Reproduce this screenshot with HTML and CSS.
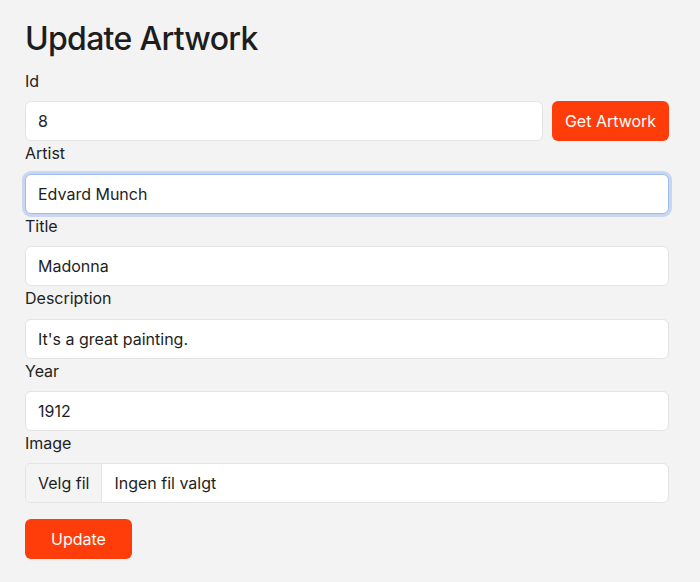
FILE: index.html
```html
<!DOCTYPE html>
<html lang="no">
<head>
<meta charset="utf-8">
<title>Update Artwork</title>
<link rel="stylesheet" href="styles.css">
</head>
<body>
<main class="page">
  <h1 class="title">Update Artwork</h1>
  <form class="form">
    <div class="group">
      <label class="label">Id</label>
      <div class="row">
        <div class="field field-grow">8</div>
        <button type="button" class="btn btn-get">Get Artwork</button>
      </div>
    </div>
    <div class="group">
      <label class="label">Artist</label>
      <div class="field field-focus">Edvard Munch</div>
    </div>
    <div class="group">
      <label class="label">Title</label>
      <div class="field">Madonna</div>
    </div>
    <div class="group">
      <label class="label">Description</label>
      <div class="field">It's a great painting.</div>
    </div>
    <div class="group">
      <label class="label">Year</label>
      <div class="field">1912</div>
    </div>
    <div class="group">
      <label class="label">Image</label>
      <div class="file">
        <span class="file-btn">Velg fil</span>
        <span class="file-name">Ingen fil valgt</span>
      </div>
    </div>
    <button type="button" class="btn btn-update">Update</button>
  </form>
</main>
</body>
</html>
```
FILE: styles.css
```css
html, body {
  margin: 0;
  padding: 0;
  background: #f3f3f3;
}
body {
  font-family: Inter, "Noto Sans", "Liberation Sans", sans-serif;
  font-size: 16px;
  color: #212121;
}
.page {
  width: 644px;
  padding: 20px 0 0 25px;
}
.title {
  margin: 0 0 10.6px 0;
  font-size: 32px;
  line-height: 1.2;
  font-weight: 500;
  color: #1d1d1d;
  letter-spacing: -0.7px;
}
.form {
  display: flex;
  flex-direction: column;
}
.label {
  display: block;
  line-height: 24px;
  margin-bottom: 8.4px;
  color: #222;
}
.row {
  display: flex;
  gap: 9px;
}
.field {
  box-sizing: border-box;
  height: 40px;
  padding: 7px 12px;
  line-height: 24px;
  background: #fff;
  border: 1px solid #e4e4e4;
  border-radius: 6px;
  color: #1e1e1e;
}
.field-grow {
  flex: 1;
}
.field-focus {
  border-color: #9dbdf0;
  box-shadow: 0 0 0 3px rgba(120, 160, 235, 0.35);
}
.btn {
  box-sizing: border-box;
  height: 40px;
  border: none;
  border-radius: 6px;
  background: #ff3d0a;
  color: #fff;
  font-family: inherit;
  font-size: 16px;
  line-height: 24px;
}
.btn-get {
  width: 117px;
  padding: 0 12px;
}
.btn-update {
  align-self: flex-start;
  width: 107px;
  margin-top: 16px;
  padding: 0 12px;
}
.file {
  box-sizing: border-box;
  display: flex;
  height: 40px;
  background: #fff;
  border: 1px solid #e4e4e4;
  border-radius: 6px;
  overflow: hidden;
  line-height: 24px;
}
.file-btn {
  padding: 7px 12px;
  background: #f4f4f4;
  border-right: 1px solid #e4e4e4;
  color: #1e1e1e;
}
.file-name {
  padding: 7px 12px;
  color: #1e1e1e;
}
```
